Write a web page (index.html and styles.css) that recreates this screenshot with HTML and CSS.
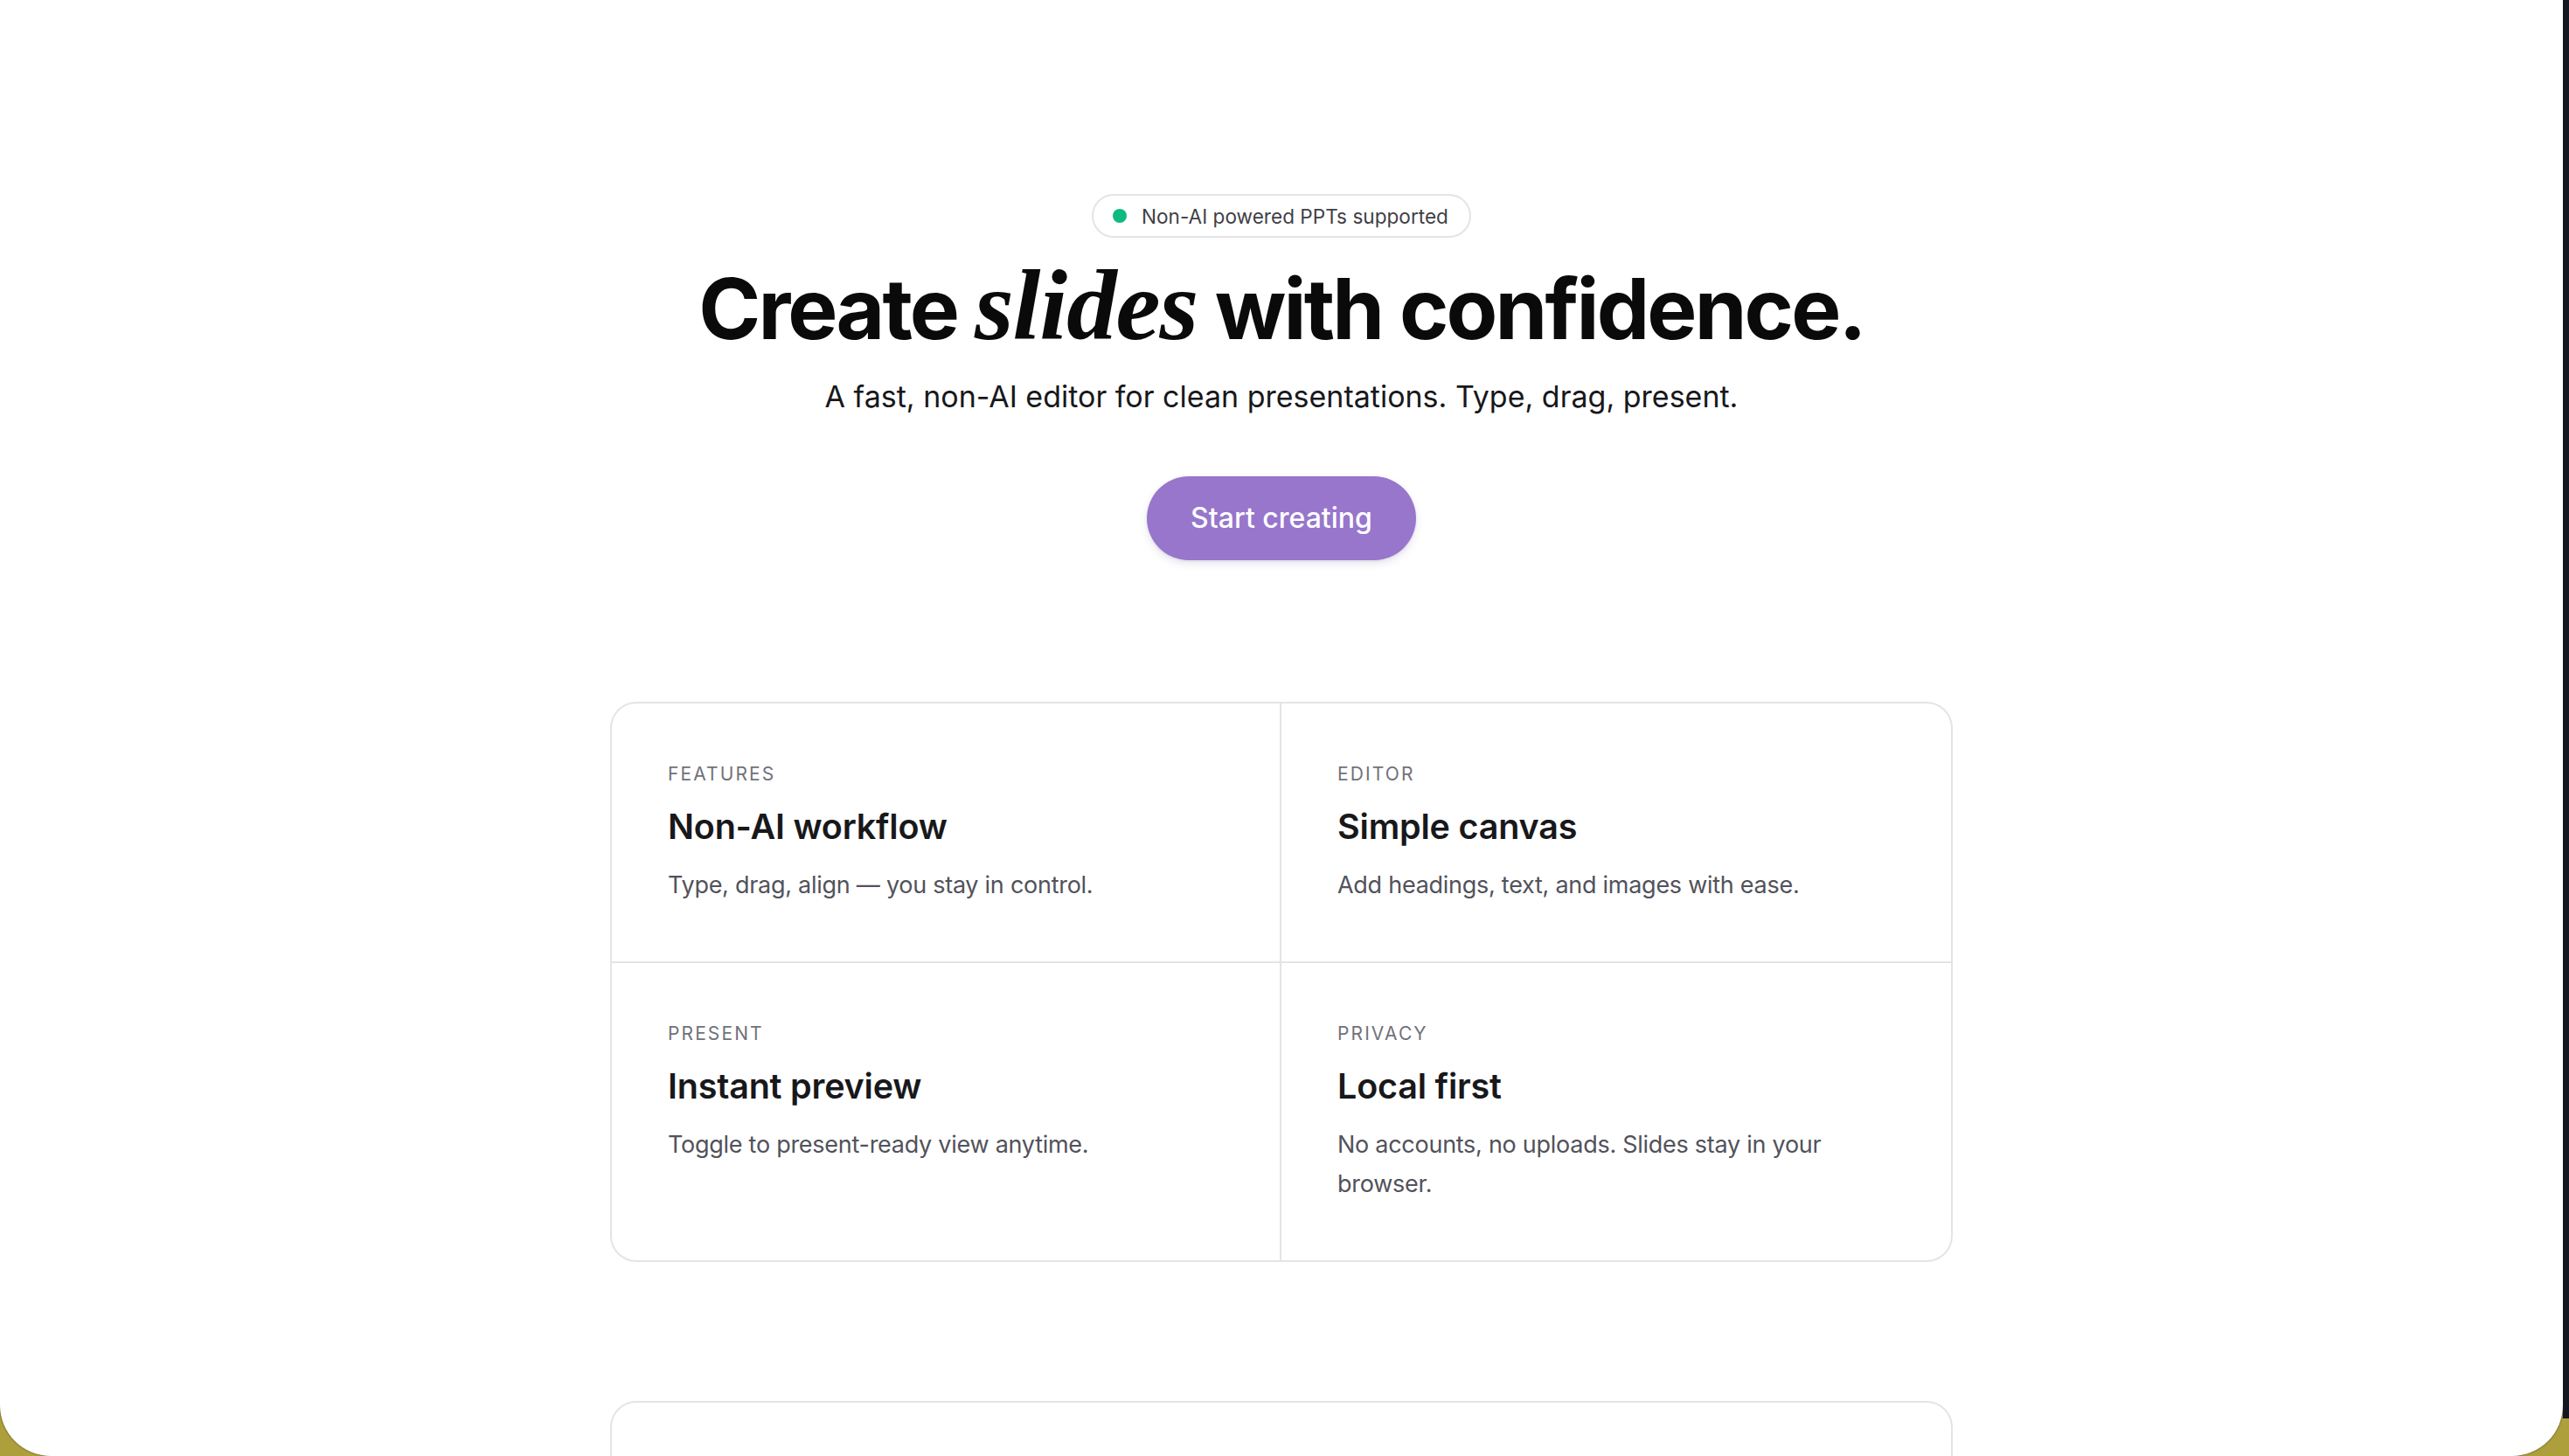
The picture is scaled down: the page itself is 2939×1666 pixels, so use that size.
FILE: index.html
```html
<!DOCTYPE html>
<html lang="en">
<head>
<meta charset="utf-8">
<title>Slides</title>
<link rel="stylesheet" href="styles.css">
</head>
<body>
<div class="desktop">
  <div class="window">
    <main class="page">
      <section class="hero">
        <div class="badge"><span class="dot"></span><span>Non-AI powered PPTs supported</span></div>
        <h1 class="title">Create <em>slides</em> with confidence.</h1>
        <p class="lead">A fast, non-AI editor for clean presentations. Type, drag, present.</p>
        <a class="cta" href="#">Start creating</a>
      </section>

      <section class="features">
        <div class="cell">
          <div class="label">Features</div>
          <h3 class="cell-title">Non-AI workflow</h3>
          <p class="cell-text">Type, drag, align — you stay in control.</p>
        </div>
        <div class="cell">
          <div class="label">Editor</div>
          <h3 class="cell-title">Simple canvas</h3>
          <p class="cell-text">Add headings, text, and images with ease.</p>
        </div>
        <div class="cell">
          <div class="label">Present</div>
          <h3 class="cell-title">Instant preview</h3>
          <p class="cell-text">Toggle to present-ready view anytime.</p>
        </div>
        <div class="cell">
          <div class="label">Privacy</div>
          <h3 class="cell-title">Local first</h3>
          <p class="cell-text">No accounts, no uploads. Slides stay in your browser.</p>
        </div>
      </section>

      <section class="panel"></section>
    </main>
  </div>
  <div class="strip"></div>
</div>
</body>
</html>
```

FILE: styles.css
```css
html, body {
  margin: 0;
  padding: 0;
}

body {
  background: #ad9f3c;
  font-family: Inter, "Noto Sans", "Liberation Sans", sans-serif;
  color: #0a0a0a;
  overflow: hidden;
}

.desktop {
  display: flex;
  align-items: flex-start;
  height: 1666px;
}

.window {
  flex: 1;
  height: 1666px;
  background: #ffffff;
  border-radius: 0 0 58px 58px;
  overflow: hidden;
  box-shadow: 0 0 2px rgba(0, 0, 0, 0.7);
}

.strip {
  width: 7px;
  height: 1623px;
  background: #131720;
}

.page {
  display: flex;
  flex-direction: column;
  align-items: center;
  padding-top: 222px;
}

.hero {
  display: flex;
  flex-direction: column;
  align-items: center;
}

.badge {
  display: inline-flex;
  align-items: center;
  gap: 17px;
  height: 50px;
  box-sizing: border-box;
  padding: 0 24px 0 22px;
  border: 2px solid #e4e4e7;
  border-radius: 999px;
  font-size: 22.6px;
  color: #3f3f46;
}

.dot {
  width: 16px;
  height: 16px;
  border-radius: 50%;
  background: #10b981;
}

.title {
  margin: 28px 0 0;
  font-size: 96px;
  line-height: 106px;
  font-weight: 700;
  letter-spacing: -0.03em;
  color: #0a0a0a;
}

.title em {
  font-family: "Liberation Serif", "DejaVu Serif", serif;
  font-size: 115px;
  line-height: 0;
  font-style: italic;
  font-weight: 700;
  letter-spacing: -0.01em;
}

.lead {
  margin: 24px 0 0;
  font-size: 34px;
  line-height: 48px;
  color: #18181b;
}

.cta {
  margin-top: 67px;
  display: inline-block;
  padding: 24px 50px;
  font-size: 32px;
  line-height: 48px;
  font-weight: 500;
  color: #ffffff;
  background: #9776cc;
  border-radius: 999px;
  text-decoration: none;
  box-shadow: 0 4px 10px rgba(60, 30, 110, 0.12), 0 1px 3px rgba(0, 0, 0, 0.08);
}

.features {
  margin-top: 162px;
  width: 1536px;
  box-sizing: border-box;
  border: 2px solid #e4e4e7;
  border-radius: 30px;
  display: grid;
  grid-template-columns: 1fr 1fr;
  overflow: hidden;
}

.cell {
  padding: 65px 64px;
  border-right: 2px solid #e4e4e7;
  border-bottom: 2px solid #e4e4e7;
}

.cell:nth-child(2n) {
  border-right: 0;
}

.cell:nth-child(n+3) {
  border-bottom: 0;
}

.label {
  font-size: 21px;
  line-height: 32px;
  letter-spacing: 0.1em;
  text-transform: uppercase;
  color: #71717a;
}

.cell-title {
  margin: 18px 0 0;
  font-size: 39.5px;
  line-height: 52px;
  font-weight: 600;
  letter-spacing: -0.005em;
  color: #18181b;
}

.cell-text {
  margin: 18px 0 0;
  font-size: 27px;
  line-height: 45px;
  letter-spacing: -0.01em;
  color: #52525b;
}

.panel {
  margin-top: 159px;
  width: 1536px;
  height: 500px;
  box-sizing: border-box;
  border: 2px solid #e4e4e7;
  border-radius: 30px;
}
```
